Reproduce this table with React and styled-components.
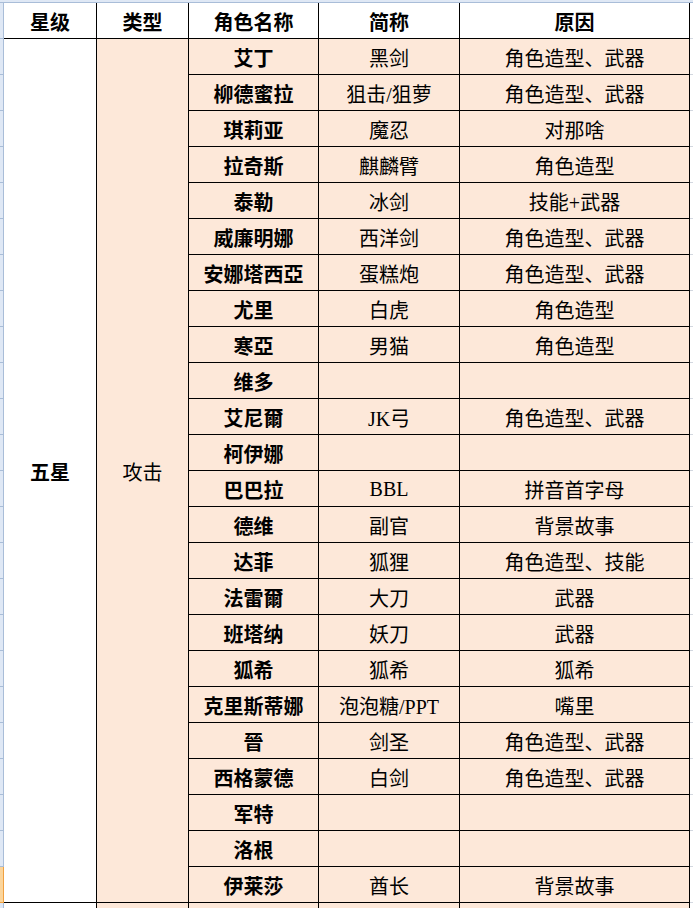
import React from "react";
import styled, { createGlobalStyle } from "styled-components";

const GlobalStyle = createGlobalStyle`
  html, body {
    margin: 0;
    padding: 0;
    height: 908px;
    overflow: hidden;
    background: #fff;
  }
`;

const PEACH = "#fde8d9";
const ROW_H = 36;

const rows = [
  ["艾丁", "黑剑", "角色造型、武器"],
  ["柳德蜜拉", "狙击/狙萝", "角色造型、武器"],
  ["琪莉亚", "魔忍", "对那啥"],
  ["拉奇斯", "麒麟臂", "角色造型"],
  ["泰勒", "冰剑", "技能+武器"],
  ["威廉明娜", "西洋剑", "角色造型、武器"],
  ["安娜塔西亞", "蛋糕炮", "角色造型、武器"],
  ["尤里", "白虎", "角色造型"],
  ["寒亞", "男猫", "角色造型"],
  ["维多", "", ""],
  ["艾尼爾", "JK弓", "角色造型、武器"],
  ["柯伊娜", "", ""],
  ["巴巴拉", "BBL", "拼音首字母"],
  ["德维", "副官", "背景故事"],
  ["达菲", "狐狸", "角色造型、技能"],
  ["法雷爾", "大刀", "武器"],
  ["班塔纳", "妖刀", "武器"],
  ["狐希", "狐希", "狐希"],
  ["克里斯蒂娜", "泡泡糖/PPT", "嘴里"],
  ["晉", "剑圣", "角色造型、武器"],
  ["西格蒙德", "白剑", "角色造型、武器"],
  ["军特", "", ""],
  ["洛根", "", ""],
  ["伊莱莎", "酋长", "背景故事"],
];

const Page = styled.div`
  display: flex;
  flex-direction: column;
  width: 693px;
  height: 908px;
  overflow: hidden;
`;

const TopBar = styled.div`
  height: 2px;
  flex-shrink: 0;
  background: #dfe8f5;
  border-bottom: 1px solid #a9bdd8;
`;

const Body = styled.div`
  display: flex;
  align-items: flex-start;
`;

const RowHeads = styled.div`
  width: 4px;
  flex-shrink: 0;
  display: flex;
  flex-direction: column;
`;

const RowHead = styled.div`
  box-sizing: border-box;
  height: ${ROW_H}px;
  background: ${(p) => (p.$selected ? "#fbd59c" : "#dfe8f5")};
  border-right: 1px solid ${(p) => (p.$selected ? "#f0a040" : "#a9bdd8")};
  border-bottom: 1px solid ${(p) => (p.$selected ? "#f0a040" : "#a9bdd8")};
`;

const Sheet = styled.div`
  display: grid;
  grid-template-columns: 93px 92px 130px 141px 230px;
  grid-auto-rows: ${ROW_H}px;
  font-family: "Liberation Serif", "Noto Sans CJK SC", serif;
  font-size: 20px;
  color: #000;
`;

const Cell = styled.div`
  box-sizing: border-box;
  display: flex;
  align-items: center;
  justify-content: center;
  padding-top: 2px;
  white-space: nowrap;
  border-right: 1px solid #000;
  border-bottom: 1px solid #000;
  background: ${(p) => (p.$peach ? PEACH : "#fff")};
  font-weight: ${(p) => (p.$bold ? 700 : 400)};
  grid-row: ${(p) => (p.$span ? `span ${p.$span}` : "auto")};
`;

const Gutter = styled.div`
  flex: 1;
  display: flex;
  flex-direction: column;
`;

const GutterCell = styled.div`
  box-sizing: border-box;
  height: ${ROW_H}px;
  border-bottom: 1px solid #d3d8e0;
`;

const headers = ["星级", "类型", "角色名称", "简称", "原因"];

export default function App() {
  const lineCount = rows.length + 2;
  return (
    <>
      <GlobalStyle />
      <Page>
        <TopBar />
        <Body>
          <RowHeads>
            {Array.from({ length: lineCount }).map((_, i) => (
              <RowHead key={i} $selected={i === rows.length} />
            ))}
          </RowHeads>
          <Sheet>
            {headers.map((h) => (
              <Cell key={h} $bold>
                {h}
              </Cell>
            ))}
            <Cell $bold $span={rows.length}>
              五星
            </Cell>
            <Cell $peach $span={rows.length}>
              攻击
            </Cell>
            {rows.map(([name, abbr, reason]) => (
              <React.Fragment key={name}>
                <Cell $peach $bold>
                  {name}
                </Cell>
                <Cell $peach>{abbr}</Cell>
                <Cell $peach>{reason}</Cell>
              </React.Fragment>
            ))}
            <Cell />
            <Cell $peach />
            <Cell $peach />
            <Cell $peach />
            <Cell $peach />
          </Sheet>
          <Gutter>
            {Array.from({ length: lineCount }).map((_, i) => (
              <GutterCell key={i} />
            ))}
          </Gutter>
        </Body>
      </Page>
    </>
  );
}
